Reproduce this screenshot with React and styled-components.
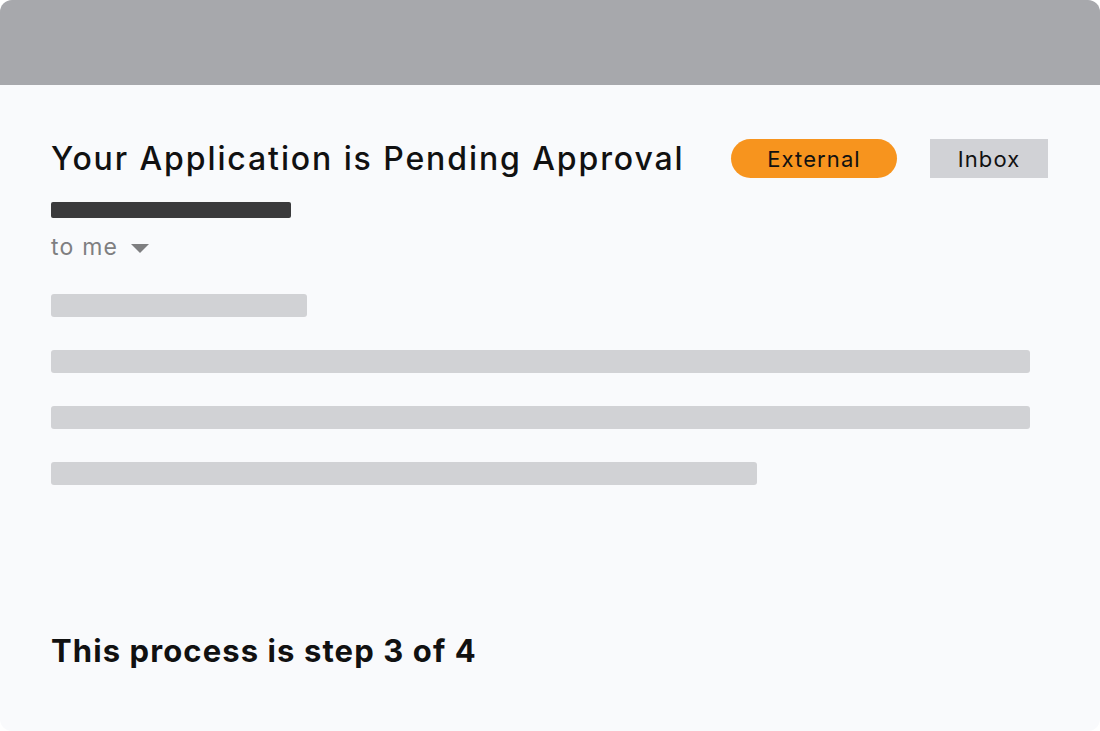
import React from 'react';
import styled, { createGlobalStyle } from 'styled-components';

const GlobalStyle = createGlobalStyle`
  html, body {
    margin: 0;
    padding: 0;
    background: #ffffff;
  }
  body {
    font-family: Inter, "Open Sans", sans-serif;
  }
`;

const Card = styled.div`
  width: 1100px;
  height: 731px;
  box-sizing: border-box;
  border-radius: 12px;
  overflow: hidden;
  background: #f9fafc;
  display: flex;
  flex-direction: column;
`;

const TopBar = styled.div`
  height: 85px;
  flex: none;
  background: #a7a8ac;
`;

const Body = styled.div`
  flex: 1;
  display: flex;
  flex-direction: column;
  padding: 54px 52px 0 51px;
`;

const TitleRow = styled.div`
  display: flex;
  align-items: center;
  height: 39px;
`;

const Subject = styled.h1`
  margin: 0;
  font-size: 32px;
  font-weight: 500;
  color: #111111;
  letter-spacing: 1.9px;
  white-space: nowrap;
`;

const Tag = styled.span`
  display: flex;
  align-items: center;
  justify-content: center;
  height: 39px;
  box-sizing: border-box;
  font-size: 22px;
  letter-spacing: 1.1px;
  color: #111111;
  flex: none;
  width: ${(p) => p.$width}px;
  margin-left: auto;
  background: ${(p) => p.$bg};
  border-radius: ${(p) => p.$radius}px;
  & + & {
    margin-left: ${(p) => p.$gap}px;
  }
`;

const Sender = styled.div`
  margin-top: 24px;
  width: 240px;
  height: 16px;
  border-radius: 2px;
  background: #3a3a3c;
`;

const Recipient = styled.div`
  display: flex;
  align-items: center;
  gap: 13px;
  margin-top: 14px;
  font-size: 23px;
  letter-spacing: 1.2px;
  color: #7f7f81;
  height: 30px;
`;

const Caret = styled.span`
  width: 0;
  height: 0;
  border-left: 9px solid transparent;
  border-right: 9px solid transparent;
  border-top: 9px solid #7f7f81;
  margin-top: 2px;
`;

const Lines = styled.div`
  display: flex;
  flex-direction: column;
  gap: 33px;
  margin-top: 32px;
`;

const Line = styled.div`
  height: 23px;
  width: ${(p) => p.$width}px;
  border-radius: 3px;
  background: #d1d2d5;
`;

const Footer = styled.div`
  margin-top: auto;
  margin-bottom: 62px;
  font-size: 31px;
  font-weight: 700;
  color: #111111;
  letter-spacing: 1.1px;
`;

const lines = [256, 979, 979, 706];

export default function App() {
  return (
    <>
      <GlobalStyle />
      <Card>
        <TopBar />
        <Body>
          <TitleRow>
            <Subject>Your Application is Pending Approval</Subject>
            <Tag $width={166} $bg="#f7941e" $radius={20}>
              External
            </Tag>
            <Tag $width={118} $gap={33} $bg="#d1d2d6" $radius={0}>
              Inbox
            </Tag>
          </TitleRow>
          <Sender />
          <Recipient>
            to me
            <Caret />
          </Recipient>
          <Lines>
            {lines.map((w, i) => (
              <Line key={i} $width={w} />
            ))}
          </Lines>
          <Footer>This process is step 3 of 4</Footer>
        </Body>
      </Card>
    </>
  );
}
